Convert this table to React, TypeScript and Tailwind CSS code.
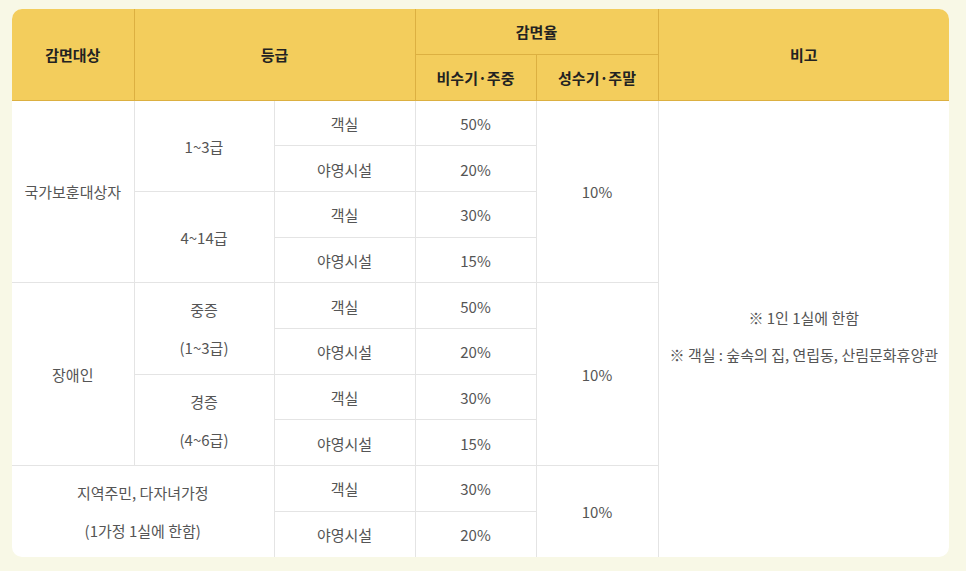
const th = "border border-[#dcb041] font-bold text-[15px] text-[#222] text-center align-middle pt-[2px]";
const td = "border border-[#e4e4e4] text-[15px] text-[#555] text-center align-middle pt-[2px]";

export default function App() {
  return (
    <div
      className="w-[966px] h-[571px] bg-[#f8f8e6] pt-[9px] pl-[12px]"
      style={{ fontFamily: '"Noto Sans CJK KR", "Noto Sans", sans-serif' }}
    >
      <div className="w-[937px] rounded-[10px] overflow-hidden bg-white">
        <table className="w-[937px] border-collapse border-hidden table-fixed">
          <colgroup>
            <col className="w-[122px]" />
            <col className="w-[140px]" />
            <col className="w-[141px]" />
            <col className="w-[121px]" />
            <col className="w-[122px]" />
            <col className="w-[291px]" />
          </colgroup>
          <thead className="bg-[#f3cd5c]">
            <tr className="h-[45px]">
              <th rowSpan={2} className={th}>감면대상</th>
              <th rowSpan={2} colSpan={2} className={th}>등급</th>
              <th colSpan={2} className={th}>감면율</th>
              <th rowSpan={2} className={th}>비고</th>
            </tr>
            <tr className="h-[46px]">
              <th className={th}>비수기·주중</th>
              <th className={th}>성수기·주말</th>
            </tr>
          </thead>
          <tbody className="leading-[38px]">
            <tr className="h-[45.7px]">
              <td rowSpan={4} className={td}>국가보훈대상자</td>
              <td rowSpan={2} className={td}>1~3급</td>
              <td className={td}>객실</td>
              <td className={td}>50%</td>
              <td rowSpan={4} className={td}>10%</td>
              <td rowSpan={10} className={`${td} pt-[14px] leading-[37px]`}>
                <div>※ 1인 1실에 한함</div>
                <div>※ 객실 : 숲속의 집, 연립동, 산림문화휴양관</div>
              </td>
            </tr>
            <tr className="h-[45.7px]">
              <td className={td}>야영시설</td>
              <td className={td}>20%</td>
            </tr>
            <tr className="h-[45.7px]">
              <td rowSpan={2} className={td}>4~14급</td>
              <td className={td}>객실</td>
              <td className={td}>30%</td>
            </tr>
            <tr className="h-[45.7px]">
              <td className={td}>야영시설</td>
              <td className={td}>15%</td>
            </tr>
            <tr className="h-[45.7px]">
              <td rowSpan={4} className={td}>장애인</td>
              <td rowSpan={2} className={td}>
                <div>중증</div>
                <div>(1~3급)</div>
              </td>
              <td className={td}>객실</td>
              <td className={td}>50%</td>
              <td rowSpan={4} className={td}>10%</td>
            </tr>
            <tr className="h-[45.7px]">
              <td className={td}>야영시설</td>
              <td className={td}>20%</td>
            </tr>
            <tr className="h-[45.7px]">
              <td rowSpan={2} className={td}>
                <div>경증</div>
                <div>(4~6급)</div>
              </td>
              <td className={td}>객실</td>
              <td className={td}>30%</td>
            </tr>
            <tr className="h-[45.7px]">
              <td className={td}>야영시설</td>
              <td className={td}>15%</td>
            </tr>
            <tr className="h-[45.7px]">
              <td rowSpan={2} colSpan={2} className={td}>
                <div>지역주민, 다자녀가정</div>
                <div>(1가정 1실에 한함)</div>
              </td>
              <td className={td}>객실</td>
              <td className={td}>30%</td>
              <td rowSpan={2} className={td}>10%</td>
            </tr>
            <tr className="h-[45.7px]">
              <td className={td}>야영시설</td>
              <td className={td}>20%</td>
            </tr>
          </tbody>
        </table>
      </div>
    </div>
  );
}
